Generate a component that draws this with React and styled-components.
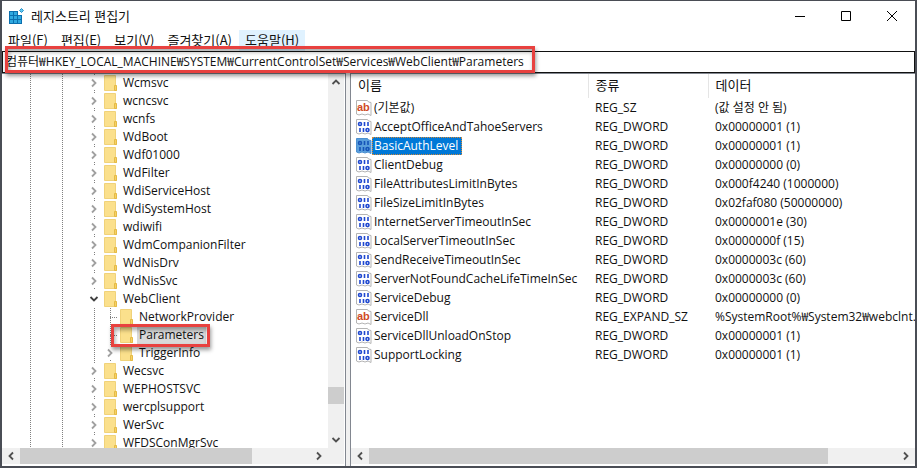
import { Fragment } from "react";
import styled, { createGlobalStyle, css } from "styled-components";

const treeNodes = [
  { name: "Wcmsvc", state: "closed" },
  { name: "wcncsvc", state: "closed" },
  { name: "wcnfs", state: "closed" },
  { name: "WdBoot", state: "closed" },
  { name: "Wdf01000", state: "closed" },
  { name: "WdFilter", state: "closed" },
  { name: "WdiServiceHost", state: "closed" },
  { name: "WdiSystemHost", state: "closed" },
  { name: "wdiwifi", state: "closed" },
  { name: "WdmCompanionFilter", state: "closed" },
  { name: "WdNisDrv", state: "closed" },
  { name: "WdNisSvc", state: "closed" },
  { name: "WebClient", state: "open" },
  { name: "NetworkProvider", state: "leaf", nested: true },
  { name: "Parameters", state: "leaf", nested: true, selected: true },
  { name: "TriggerInfo", state: "closed", nested: true },
  { name: "Wecsvc", state: "closed" },
  { name: "WEPHOSTSVC", state: "closed" },
  { name: "wercplsupport", state: "closed" },
  { name: "WerSvc", state: "closed" },
  { name: "WFDSConMgrSvc", state: "closed" },
];

const values = [
  { name: "(기본값)", type: "REG_SZ", data: "(값 설정 안 됨)" },
  { name: "AcceptOfficeAndTahoeServers", type: "REG_DWORD", data: "0x00000001 (1)" },
  { name: "BasicAuthLevel", type: "REG_DWORD", data: "0x00000001 (1)", selected: true },
  { name: "ClientDebug", type: "REG_DWORD", data: "0x00000000 (0)" },
  { name: "FileAttributesLimitInBytes", type: "REG_DWORD", data: "0x000f4240 (1000000)" },
  { name: "FileSizeLimitInBytes", type: "REG_DWORD", data: "0x02faf080 (50000000)" },
  { name: "InternetServerTimeoutInSec", type: "REG_DWORD", data: "0x0000001e (30)" },
  { name: "LocalServerTimeoutInSec", type: "REG_DWORD", data: "0x0000000f (15)" },
  { name: "SendReceiveTimeoutInSec", type: "REG_DWORD", data: "0x0000003c (60)" },
  { name: "ServerNotFoundCacheLifeTimeInSec", type: "REG_DWORD", data: "0x0000003c (60)" },
  { name: "ServiceDebug", type: "REG_DWORD", data: "0x00000000 (0)" },
  { name: "ServiceDll", type: "REG_EXPAND_SZ", data: "%SystemRoot%₩System32₩webclnt." },
  { name: "ServiceDllUnloadOnStop", type: "REG_DWORD", data: "0x00000001 (1)" },
  { name: "SupportLocking", type: "REG_DWORD", data: "0x00000001 (1)" },
];

const menus = ["파일(F)", "편집(E)", "보기(V)", "즐겨찾기(A)", "도움말(H)"];

const arrows = {
  up: "M1.5 7 5 3.5 8.5 7",
  down: "M1.5 3 5 6.5 8.5 3",
  left: "M7 1.5 3.5 5 7 8.5",
  right: "M3 1.5 6.5 5 3 8.5",
};

function Arrow({ to, color = "#505050" }) {
  return (
    <svg width="10" height="10" viewBox="0 0 10 10" fill="none" aria-hidden="true">
      <path d={arrows[to]} stroke={color} strokeWidth="1.8" />
    </svg>
  );
}

function RegistryIcon() {
  return (
    <svg width="17" height="16" viewBox="0 0 17 16" aria-hidden="true">
      <path d="M1 3h9v4h4v9H1z" fill="#0b6fae" />
      <path
        d="M2 4h3v3H2zM6 4h3v3H6zM2 8h3v3H2zM6 8h3v3H6zM10 8h3v3h-3zM2 12h3v3H2zM6 12h3v3H6zM10 12h3v3h-3z"
        fill="#2fa9e0"
      />
      <path d="m13.500 0.500 2 2-2 2-2-2z" fill="#5cc8f2" stroke="#2b8fc6" />
    </svg>
  );
}

function FolderIcon() {
  return (
    <svg width="14" height="16" viewBox="0 0 14 16" aria-hidden="true">
      <path d="M.5.5h11v10l1 .5v4.500H.5z" fill="#fbe08c" stroke="#f0d27a" />
      <path d="M10.500 10.500h2v5h-2z" fill="#f6d067" stroke="#e5bb45" />
    </svg>
  );
}

function ValueIcon({ text, selected }) {
  return (
    <svg width="16" height="16" viewBox="0 0 16 16" aria-hidden="true">
      <path
        d="M.5.5h11l1 1.500 2.500.5v13l-3-1.500-3 1-3-1-3 1-2.500-1z"
        fill={selected ? "#5a9fdc" : "#fff"}
        stroke={selected ? "#4b8fd0" : "#b4b4b4"}
      />
      {text ? (
        <IconText x="1" y="11" fill="#cf4a26">ab</IconText>
      ) : (
        <g fill="none" stroke={selected ? "#1554b8" : "#1f48d0"} strokeWidth="1.6">
          <circle cx="4" cy="5" r="1.500" />
          <path d="M8.500 3v4M12 3v4M4 9v4M7.500 9v4" />
          <circle cx="11.500" cy="11" r="1.500" />
        </g>
      )}
    </svg>
  );
}

function ScrollBar({ vertical, before, thumb, after }) {
  return (
    <Bar $vertical={vertical}>
      <BarButton type="button" $vertical={vertical} aria-label={vertical ? "위로" : "왼쪽으로"}>
        <Arrow to={vertical ? "up" : "left"} />
      </BarButton>
      <BarPart $grow={before} />
      <BarPart $grow={thumb} $thumb />
      <BarPart $grow={after} />
      <BarButton type="button" $vertical={vertical} aria-label={vertical ? "아래로" : "오른쪽으로"}>
        <Arrow to={vertical ? "down" : "right"} />
      </BarButton>
    </Bar>
  );
}

function TreeRow({ node }) {
  return (
    <TreeItem role="treeitem" aria-selected={!!node.selected}>
      <Guide $line />
      <Guide />
      <Guide $line />
      <Guide />
      {node.nested && <Guide $line />}
      {node.state === "leaf" ? (
        <Guide $line $branch />
      ) : (
        <Guide $line={node.state === "closed"} as="button" type="button" aria-label={node.name}>
          <Expander>
            <Arrow
              to={node.state === "open" ? "down" : "right"}
              color={node.state === "open" ? "#404040" : "#a0a0a0"}
            />
          </Expander>
        </Guide>
      )}
      <FolderSlot>
        <FolderIcon />
      </FolderSlot>
      <TreeLabel $selected={node.selected}>{node.name}</TreeLabel>
      {node.selected && <TreeCallout />}
    </TreeItem>
  );
}

export default function App() {
  return (
    <Fragment>
      <GlobalStyle />
      <Window>
        <TitleBar>
          <RegistryIcon />
          <Title>레지스트리 편집기</Title>
          <WindowButton type="button" aria-label="최소화">
            <svg width="10" height="10" aria-hidden="true">
              <path d="M0 5.500h10" stroke="#000" />
            </svg>
          </WindowButton>
          <WindowButton type="button" aria-label="최대화">
            <svg width="10" height="10" aria-hidden="true">
              <path d="M.5.5h9v9h-9z" fill="none" stroke="#000" />
            </svg>
          </WindowButton>
          <WindowButton type="button" aria-label="닫기">
            <svg width="10" height="10" aria-hidden="true">
              <path d="m0 0 10 10M10 0 0 10" stroke="#000" />
            </svg>
          </WindowButton>
        </TitleBar>
        <MenuBar>
          {menus.map((menu) => (
            <MenuButton key={menu} type="button" $active={menu === "도움말(H)"}>
              {menu}
            </MenuButton>
          ))}
        </MenuBar>
        <AddressBar>
          <AddressInput
            aria-label="주소"
            spellCheck={false}
            defaultValue="컴퓨터₩HKEY_LOCAL_MACHINE₩SYSTEM₩CurrentControlSet₩Services₩WebClient₩Parameters"
          />
          <AddressCallout />
        </AddressBar>
        <Panes>
          <TreePane>
            <Tree role="tree">
              {treeNodes.map((node) => (
                <TreeRow key={node.name} node={node} />
              ))}
            </Tree>
            <ScrollBar vertical before={294} thumb={17} after={28} />
            <ScrollBar before={0} thumb={80} after={20} />
            <Corner />
          </TreePane>
          <ListPane>
            <ListScroll>
              <ValueTable>
                <colgroup>
                  <NameCol />
                  <TypeCol />
                  <col />
                </colgroup>
                <thead>
                  <tr>
                    <th>이름</th>
                    <th>종류</th>
                    <th>데이터</th>
                  </tr>
                </thead>
                <tbody>
                  {values.map((value) => (
                    <tr key={value.name}>
                      <td>
                        <ValueName>
                          <ValueIcon
                            text={value.type !== "REG_DWORD"}
                            selected={value.selected}
                          />
                          <ValueLabel $selected={value.selected}>{value.name}</ValueLabel>
                        </ValueName>
                      </td>
                      <td>{value.type}</td>
                      <td>{value.data}</td>
                    </tr>
                  ))}
                </tbody>
              </ValueTable>
            </ListScroll>
            <ScrollBar before={0} thumb={87} after={13} />
          </ListPane>
        </Panes>
      </Window>
    </Fragment>
  );
}

const GlobalStyle = createGlobalStyle`
  * {
    box-sizing: border-box;
  }

  body {
    margin: 0;
    background: #fff;
  }

  body,
  button,
  input {
    font-family: "Open Sans", "Noto Sans CJK KR", sans-serif;
    font-size: 12px;
    color: #111;
  }

  button {
    padding: 0;
    border: 0;
    background: none;
  }

  svg {
    display: block;
    flex: none;
  }
`;

const Window = styled.main`
  height: 100vh;
  display: flex;
  flex-direction: column;
  border: 1px solid #4a4d55;
  border-width: 1px 2px 2px;
`;

const TitleBar = styled.header`
  height: 29px;
  flex: none;
  display: flex;
  align-items: center;
  padding-left: 6px;
`;

const Title = styled.h1`
  flex: 1;
  margin: 0 0 0 6px;
  font-size: 13px;
  font-weight: 400;
  line-height: 18px;
`;

const WindowButton = styled.button`
  width: 46px;
  height: 29px;
  display: flex;
  align-items: center;
  justify-content: center;
`;

const MenuBar = styled.nav`
  height: 21px;
  flex: none;
  display: flex;
  gap: 1px;
`;

const MenuButton = styled.button`
  padding: 0 6px 2px;
  font-family: "Noto Sans CJK KR", sans-serif;
  font-size: 13px;
  line-height: 18px;
  background: ${({ $active }) => ($active ? "#e0f2ff" : "transparent")};
`;

const AddressBar = styled.div`
  position: relative;
  z-index: 1;
  flex: none;
  display: flex;
  height: 22px;
  border: 1px solid #111;
`;

const AddressInput = styled.input`
  flex: 1;
  min-width: 0;
  padding: 0 3px 2px;
  border: 0;
  outline: 0;
`;

const callout = css`
  position: absolute;
  z-index: 1;
  border: 3px solid #e8413f;
  box-shadow:
    1px 3px 4px rgba(0, 0, 0, 0.4),
    inset 1px 3px 4px rgba(0, 0, 0, 0.35);
  pointer-events: none;
`;

const AddressCallout = styled.span`
  ${callout}
  left: 2px;
  top: -6px;
  width: 530px;
  height: 27px;
`;

const TreeCallout = styled.span`
  ${callout}
  left: 109px;
  top: -2px;
  width: 99px;
  height: 23px;
`;

const Panes = styled.div`
  flex: 1;
  min-height: 0;
  display: flex;
  gap: 4px;
  background: #f0f0f0;
`;

const TreePane = styled.section`
  width: 344px;
  flex: none;
  display: grid;
  grid-template: minmax(0, 1fr) 16px / minmax(0, 1fr) 16px;
  padding: 0 1px 2px 0;
  border-top: 1px solid #828790;
  border-right: 1px solid #828790;
  background: #fff;
`;

const Tree = styled.div`
  overflow: hidden;
`;

const TreeItem = styled.div`
  position: relative;
  height: 18px;
  display: flex;
  align-items: center;
  padding-left: 20px;
  white-space: nowrap;
`;

const Guide = styled.span`
  width: 16px;
  height: 18px;
  flex: none;
  background-image: ${({ $line, $branch }) =>
    [
      $line && "repeating-linear-gradient(#808080 0 1px, transparent 1px 2px)",
      $branch && "repeating-linear-gradient(90deg, #808080 0 1px, transparent 1px 2px)",
    ]
      .filter(Boolean)
      .join(", ") || "none"};
  background-size:
    1px 100%,
    8px 1px;
  background-position:
    8px 0,
    8px 9px;
  background-repeat: no-repeat;
`;

const Expander = styled.span`
  height: 14px;
  display: flex;
  align-items: center;
  justify-content: center;
  background: #fff;
`;

const FolderSlot = styled.span`
  padding: 0 3px 0 2px;
`;

const TreeLabel = styled.span`
  height: 18px;
  padding: 0 2px;
  line-height: 17px;
  background: ${({ $selected }) => ($selected ? "#d9d9d9" : "transparent")};
`;

const Corner = styled.div`
  background: #f0f0f0;
`;

const Bar = styled.div`
  display: flex;
  flex-direction: ${({ $vertical }) => ($vertical ? "column" : "row")};
  min-width: 0;
  background: #f0f0f0;
`;

const BarButton = styled.button`
  width: ${({ $vertical }) => ($vertical ? 16 : 18)}px;
  height: 16px;
  flex: none;
  display: flex;
  align-items: center;
  justify-content: center;
`;

const BarPart = styled.span`
  flex: ${({ $grow }) => $grow} 1 0;
  background: ${({ $thumb }) => ($thumb ? "#cdcdcd" : "transparent")};
`;

const ListPane = styled.section`
  flex: 1;
  min-width: 0;
  display: grid;
  grid-template-rows: minmax(0, 1fr) 16px;
  padding-bottom: 2px;
  border-top: 1px solid #828790;
  border-left: 1px solid #828790;
  background: #fff;
`;

const ListScroll = styled.div`
  min-width: 0;
  overflow: hidden;
`;

const ValueTable = styled.table`
  width: 100%;
  table-layout: fixed;
  border-collapse: collapse;
  white-space: nowrap;

  th {
    height: 24px;
    padding: 0 7px 2px;
    border-right: 1px solid #e5e5e5;
    font-size: 13px;
    font-weight: 400;
    line-height: 18px;
    text-align: left;
  }

  th:last-child {
    border-right: 0;
  }

  td {
    height: 19px;
    padding: 0 0 0 7px;
    line-height: 18px;
    overflow: hidden;
  }

  td:first-child {
    padding-left: 5px;
  }
`;

const NameCol = styled.col`
  width: 237px;
`;

const TypeCol = styled.col`
  width: 120px;
`;

const ValueName = styled.span`
  display: flex;
  align-items: center;
`;

const ValueLabel = styled.span`
  padding: 0 4px 0 2px;
  ${({ $selected }) =>
    $selected &&
    css`
      color: #fff;
      background: #0078d7;
      outline: 1px dotted #d08a3c;
      outline-offset: -1px;
    `}
`;

const IconText = styled.text`
  font-family: "Liberation Sans", sans-serif;
  font-size: 11px;
  font-weight: 700;
`;
